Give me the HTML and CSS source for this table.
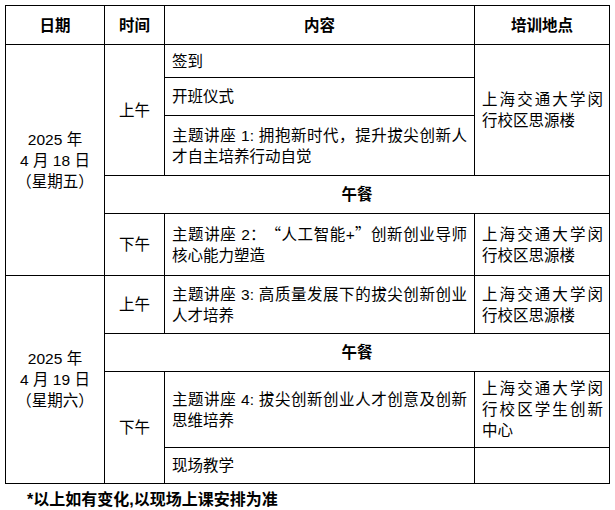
FILE: index.html
```html
<!DOCTYPE html>
<html lang="zh-CN">
<head>
<meta charset="utf-8">
<title>培训日程</title>
<link rel="stylesheet" href="styles.css">
</head>
<body>
<div class="schedule">
  <div class="cell head c1 r1">日期</div>
  <div class="cell head c2 r1">时间</div>
  <div class="cell head c3 r1">内容</div>
  <div class="cell head c4 r1">培训地点</div>

  <div class="cell center c1 day1"><div>2025 年<br>4 月 18 日<br>（星期五）</div></div>
  <div class="cell center c2 am1">上午</div>
  <div class="cell text c3 r2">签到</div>
  <div class="cell text c3 r3">开班仪式</div>
  <div class="cell text c3 r4">主题讲座 1: 拥抱新时代，提升拔尖创新人才自主培养行动自觉</div>
  <div class="cell text c4 am1">上海交通大学闵行校区思源楼</div>

  <div class="cell head lunch r5">午餐</div>

  <div class="cell center c2 r6">下午</div>
  <div class="cell text c3 r6"><div>主题讲座 2<span class="colon">：</span><span class="q-open">“</span>人工智能+<span class="q-close">”</span>创新创业导师核心能力塑造</div></div>
  <div class="cell text c4 r6">上海交通大学闵行校区思源楼</div>

  <div class="cell center c1 day2"><div>2025 年<br>4 月 19 日<br>（星期六）</div></div>
  <div class="cell center c2 r7">上午</div>
  <div class="cell text c3 r7">主题讲座 3: 高质量发展下的拔尖创新创业人才培养</div>
  <div class="cell text c4 r7">上海交通大学闵行校区思源楼</div>

  <div class="cell head lunch r8">午餐</div>

  <div class="cell center c2 pm2">下午</div>
  <div class="cell text c3 r9">主题讲座 4: 拔尖创新创业人才创意及创新思维培养</div>
  <div class="cell text c4 r9">上海交通大学闵行校区学生创新中心</div>
  <div class="cell text c3 r10">现场教学</div>
  <div class="cell text c4 r10"></div>
</div>
<p class="note">*以上如有变化,以现场上课安排为准</p>
</body>
</html>
```
FILE: styles.css
```css
html, body {
  margin: 0;
  padding: 0;
  background: #fff;
}

body {
  font-family: "Liberation Sans", "Noto Sans CJK SC", sans-serif;
  font-size: 15.5px;
  line-height: 21px;
  color: #000;
  text-spacing-trim: space-all;
}

.schedule {
  display: grid;
  grid-template-columns: 99px 60px 310px 135px;
  grid-template-rows: 39px 33px 38px 60px 38px 62px 58px 38px 76px 36px;
  width: max-content;
  margin: 5px 0 0 5px;
  border-left: 1px solid #000;
  border-top: 1px solid #000;
}

.cell {
  display: flex;
  flex-direction: column;
  justify-content: center;
  border-right: 1px solid #000;
  border-bottom: 1px solid #000;
}

.head {
  font-weight: 700;
  text-align: center;
}

.center {
  text-align: center;
}

.text {
  text-align: justify;
  padding: 0 7px 0 7px;
}

.c4.text {
  padding: 0 6px 0 7px;
}

.colon,
.q-open,
.q-close {
  display: inline-block;
  width: 1em;
  font-family: "Noto Sans CJK SC", sans-serif;
}

.colon,
.q-close {
  text-align: left;
}

.q-open {
  text-align: right;
}

.c1 { grid-column: 1; }
.c2 { grid-column: 2; }
.c3 { grid-column: 3; }
.c4 { grid-column: 4; }
.lunch { grid-column: 2 / 5; }

.r1 { grid-row: 1; }
.r2 { grid-row: 2; }
.r3 { grid-row: 3; }
.r4 { grid-row: 4; }
.r5 { grid-row: 5; }
.r6 { grid-row: 6; }
.r7 { grid-row: 7; }
.r8 { grid-row: 8; }
.r9 { grid-row: 9; }
.r10 { grid-row: 10; }

.day1 { grid-row: 2 / 7; }
.day2 { grid-row: 7 / 11; }
.am1 { grid-row: 2 / 5; }
.pm2 { grid-row: 9 / 11; }

.note {
  margin: 6px 0 0 27px;
  font-size: 16px;
  line-height: 20px;
  font-weight: 700;
}
```
